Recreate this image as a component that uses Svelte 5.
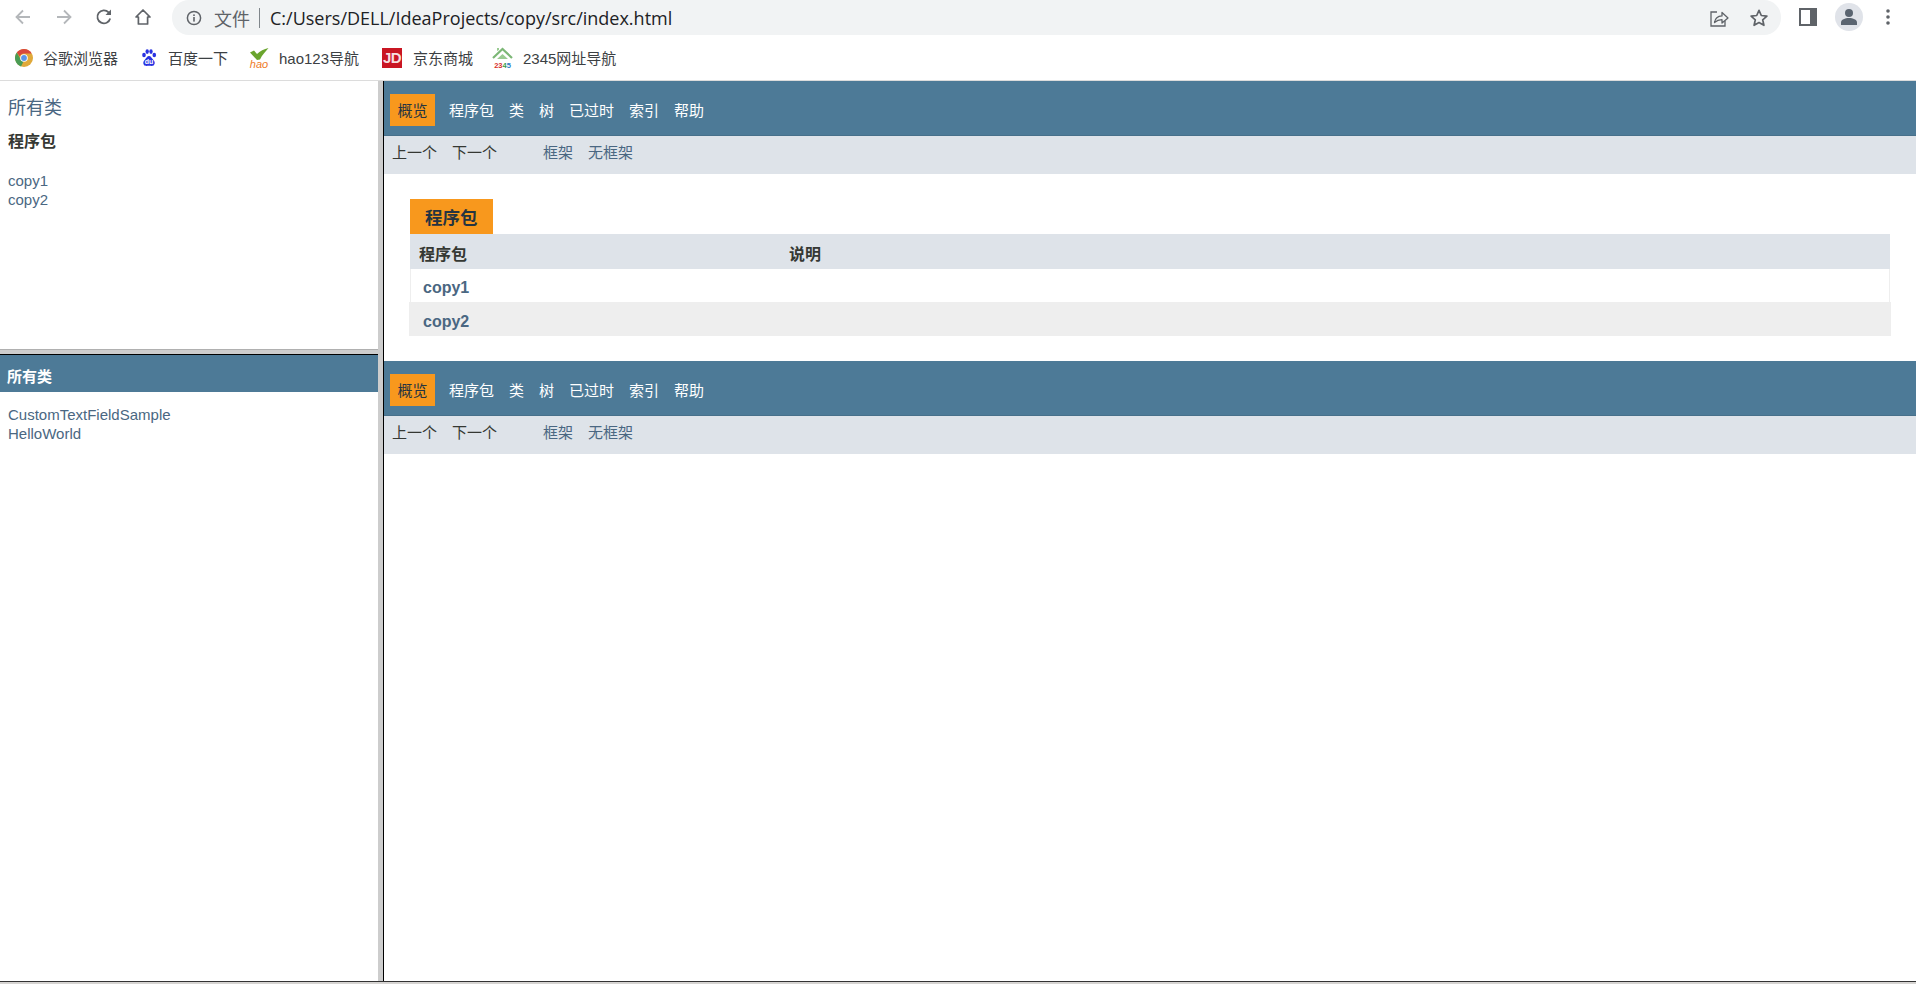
<script lang="ts">
const navItems = ["程序包", "类", "树", "已过时", "索引", "帮助"];
const packages = ["copy1", "copy2"];
const classes = ["CustomTextFieldSample", "HelloWorld"];
</script>

{#snippet topNav()}
  <div class="nav">
    <span class="nav-active">概览</span>
    {#each navItems as item}
      <span class="nav-item">{item}</span>
    {/each}
  </div>
  <div class="subnav">
    <span class="sub-plain">上一个</span>
    <span class="sub-plain">下一个</span>
    <span class="sub-link first">框架</span>
    <span class="sub-link">无框架</span>
  </div>
{/snippet}

<div class="page">
  <header class="toolbar">
    <button class="tb-btn back" aria-label="back">
      <svg width="20" height="20" viewBox="0 0 20 20"><path d="M17 10H4M10 3.5 3.5 10l6.5 6.5" fill="none" stroke="#b4b7ba" stroke-width="1.8" /></svg>
    </button>
    <button class="tb-btn fwd" aria-label="forward">
      <svg width="20" height="20" viewBox="0 0 20 20"><path d="M3 10h13M10 3.5l6.5 6.5-6.5 6.5" fill="none" stroke="#b4b7ba" stroke-width="1.8" /></svg>
    </button>
    <button class="tb-btn reload" aria-label="reload">
      <svg width="20" height="20" viewBox="0 0 20 20"><path d="M16.2 11.5A6.5 6.5 0 1 1 14.6 5.3L16.5 7" fill="none" stroke="#5f6368" stroke-width="1.8" /><path d="M17 2.5V8h-5.5z" fill="#5f6368" /></svg>
    </button>
    <button class="tb-btn home" aria-label="home">
      <svg width="20" height="20" viewBox="0 0 20 20"><path d="M10 3 3 10h2.4v7h9.2v-7H17z" fill="none" stroke="#5f6368" stroke-width="1.7" stroke-linejoin="round" /></svg>
    </button>
    <div class="omnibox">
      <svg class="info" width="16" height="16" viewBox="0 0 16 16"><circle cx="8" cy="8" r="6.6" fill="none" stroke="#5f6368" stroke-width="1.5" /><rect x="7.2" y="7" width="1.6" height="4.6" fill="#5f6368" /><rect x="7.2" y="4.4" width="1.6" height="1.6" fill="#5f6368" /></svg>
      <span class="scheme">文件</span>
      <span class="divider"></span>
      <span class="url">C:/Users/DELL/IdeaProjects/copy/src/index.html</span>
      <span class="spacer"></span>
      <svg class="share" width="20" height="20" viewBox="0 0 20 20"><path d="M8 4H2v14h14v-5" fill="none" stroke="#5f6368" stroke-width="1.3" /><path d="M5.5 14.5c.6-4 3.4-6.400 7.500-6.600V4.500l6 5.400-6 5.200v-3.400c-3 0-5.500 1-7.500 2.800z" fill="none" stroke="#5f6368" stroke-width="1.3" stroke-linejoin="round" /></svg>
      <svg class="star" width="20" height="20" viewBox="0 0 20 20"><path d="M10 2.300l2.300 5.200 5.600.6-4.200 3.700 1.200 5.500L10 14.500l-4.900 2.800 1.200-5.500-4.200-3.700 5.600-.6z" fill="none" stroke="#5f6368" stroke-width="1.7" stroke-linejoin="round" /></svg>
    </div>
    <svg class="panel" width="18" height="18" viewBox="0 0 18 18"><rect x="0" y="0" width="18" height="18" fill="#5f6368" /><rect x="2" y="2" width="9" height="14" fill="#fff" /></svg>
    <div class="avatar">
      <svg width="18" height="18" viewBox="0 0 18 18"><circle cx="9" cy="5" r="4" fill="#5a6470" /><path d="M1 17v-2.500C1 11.500 5 10 9 10s8 1.500 8 4.500V17z" fill="#5a6470" /></svg>
    </div>
    <svg class="kebab" width="6" height="18" viewBox="0 0 6 18"><circle cx="3" cy="3" r="1.800" fill="#5f6368" /><circle cx="3" cy="9" r="1.800" fill="#5f6368" /><circle cx="3" cy="15" r="1.800" fill="#5f6368" /></svg>
  </header>

  <div class="bookmarks">
    <span class="bm bm-chrome">
      <svg width="18" height="18" viewBox="0 0 18 18">
        <circle cx="9" cy="9" r="9" fill="#e0a93a" />
        <path d="M9 0a9 9 0 0 1 7.800 4.500H9A4.500 4.500 0 0 0 4.800 7.400L1.800 3.600A9 9 0 0 1 9 0z" fill="#d9483b" />
        <path d="M1.800 3.600 5.500 10a4 4 0 0 0 3 2.500L6 17.500A9 9 0 0 1 1.800 3.600z" fill="#4a9c55" />
        <circle cx="9" cy="9" r="3.800" fill="#fff" />
        <circle cx="9" cy="9" r="2.900" fill="#5a95e8" />
      </svg>
      <span>谷歌浏览器</span>
    </span>
    <span class="bm bm-baidu">
      <svg width="18" height="18" viewBox="0 0 18 18">
        <ellipse cx="4" cy="6" rx="1.800" ry="2.300" fill="#2932e1" />
        <ellipse cx="7.200" cy="2.600" rx="1.700" ry="2.300" fill="#2932e1" />
        <ellipse cx="11" cy="2.600" rx="1.700" ry="2.300" fill="#2932e1" />
        <ellipse cx="14.300" cy="6" rx="1.800" ry="2.300" fill="#2932e1" />
        <path d="M9 7c-2 0-2.500 2-4 3.500S2.500 14 4 16c1 1.300 3 .8 5 .8s4 .5 5-.8c1.500-2 .5-4-1-5.500S11 7 9 7z" fill="#2932e1" />
        <text class="du" x="9" y="15" text-anchor="middle">du</text>
      </svg>
      <span>百度一下</span>
    </span>
    <span class="bm bm-hao">
      <svg width="22" height="20" viewBox="0 0 22 20">
        <path d="M2 4.500 6 2.500l3 3.500C12 3 16 1 20.500 0c-3 3.500-6.500 7-8.500 11.500L9 12z" fill="#6aa52e" />
        <text class="hao" x="11" y="19.500" text-anchor="middle">hao</text>
      </svg>
      <span>hao123导航</span>
    </span>
    <span class="bm bm-jd">
      <span class="jd">JD</span>
      <span>京东商城</span>
    </span>
    <span class="bm">
      <svg width="21" height="22" viewBox="0 0 21 22">
        <path d="M1 11 10.500 2 20 11" fill="none" stroke="#7cb776" stroke-width="2.200" />
        <path d="M5 4V1h2v2zM5 12l5.500-5 5.500 5z" fill="#9acb92" />
        <text class="n2345" x="10.500" y="20.500" text-anchor="middle"><tspan fill="#d9302a">23</tspan><tspan fill="#3a9a48">4</tspan><tspan fill="#2f7cc4">5</tspan></text>
      </svg>
      <span>2345网址导航</span>
    </span>
  </div>

  <div class="frames">
    <aside class="left">
      <section class="pkg-frame">
        <h1>所有类</h1>
        <h2>程序包</h2>
        <ul>
          {#each packages as p}<li>{p}</li>{/each}
        </ul>
      </section>
      <div class="hsplit"></div>
      <section class="class-frame">
        <div class="class-bar">所有类</div>
        <ul>
          {#each classes as c}<li>{c}</li>{/each}
        </ul>
      </section>
    </aside>
    <div class="vsplit"></div>
    <main class="right">
      {@render topNav()}
      <div class="summary">
        <div class="caption">程序包</div>
        <div class="row head">
          <span class="col1">程序包</span>
          <span>说明</span>
        </div>
        <div class="row alt-a"><span class="pkg">copy1</span></div>
        <div class="row alt-b"><span class="pkg">copy2</span></div>
      </div>
      {@render topNav()}
    </main>
  </div>
  <div class="taskbar"></div>
</div>

<style>
  :global(body) {
    margin: 0;
    background: #fff;
  }
  .page {
    display: flex;
    flex-direction: column;
    height: 984px;
    overflow: hidden;
    font-family: "Liberation Sans", "Noto Sans CJK SC", sans-serif;
    font-size: 15px;
    color: #353833;
  }

  /* browser chrome */
  .toolbar {
    display: flex;
    align-items: flex-start;
    height: 35px;
    flex: none;
  }
  .tb-btn {
    width: 20px;
    height: 20px;
    margin-top: 7px;
    padding: 0;
    border: 0;
    background: none;
  }
  .back { margin-left: 13px; }
  .fwd { margin-left: 21px; }
  .reload { margin-left: 20px; }
  .home { margin-left: 19px; }
  .omnibox {
    display: flex;
    align-items: center;
    width: 1609px;
    height: 35px;
    margin-left: 19px;
    box-sizing: border-box;
    padding-left: 14px;
    border-radius: 17px;
    background: #f1f3f4;
  }
  .scheme {
    margin-left: 12px;
    font-size: 18px;
    color: #5f6368;
  }
  .divider {
    width: 1px;
    height: 20px;
    margin: 0 11px 0 9px;
    background: #80868b;
  }
  .url {
    font-family: "Open Sans", "Noto Sans", sans-serif;
    font-size: 18px;
    margin-left: -1px;
    color: #202124;
  }
  .spacer { flex: 1; }
  .share { margin-right: 20px; }
  .star { margin-right: 12px; }
  .panel { margin: 8px 0 0 18px; flex: none; }
  .avatar {
    display: flex;
    align-items: center;
    justify-content: center;
    width: 28px;
    height: 28px;
    margin: 3px 0 0 18px;
    border-radius: 50%;
    background: #e0e3e9;
    flex: none;
  }
  .kebab { margin: 8px 0 0 22px; flex: none; }

  .bookmarks {
    display: flex;
    align-items: center;
    height: 46px;
    flex: none;
    padding-left: 15px;
    box-sizing: border-box;
    border-bottom: 1px solid #dcdcdc;
    color: #3c4043;
  }
  .bm {
    display: flex;
    align-items: center;
    flex: none;
    gap: 10px;
    box-sizing: border-box;
    font-size: 15px;
    white-space: nowrap;
  }
  .bm svg { flex: none; }
  .bm-chrome { width: 125px; }
  .bm-baidu { width: 108px; }
  .bm-hao { width: 134px; gap: 9px; }
  .bm-jd { width: 110px; gap: 11px; }
  .du {
    font-family: "Liberation Sans", sans-serif;
    font-size: 7px;
    font-weight: 700;
    fill: #fff;
  }
  .hao {
    font-family: "Liberation Sans", sans-serif;
    font-size: 11px;
    font-style: italic;
    fill: #ee7a1f;
  }
  .n2345 {
    font-family: "Liberation Sans", sans-serif;
    font-size: 7.500px;
    font-weight: 700;
  }
  .jd {
    display: flex;
    align-items: center;
    justify-content: center;
    width: 20px;
    height: 20px;
    background: #c91623;
    color: #f6dfe0;
    font-size: 15px;
    font-weight: 700;
    letter-spacing: -0.5px;
  }

  /* frames */
  .frames {
    display: flex;
    flex: 1;
    min-height: 0;
  }
  .left {
    display: flex;
    flex-direction: column;
    width: 378px;
    flex: none;
  }
  .vsplit {
    width: 5px;
    flex: none;
    background: #cdcdcd;
    border-right: 1px solid #000;
  }
  .right {
    flex: 1;
    min-width: 0;
  }
  .pkg-frame {
    height: 268px;
    flex: none;
    padding: 15px 0 0 8px;
    box-sizing: border-box;
  }
  h1 {
    margin: 0;
    font-size: 18px;
    font-weight: 400;
    line-height: 24px;
    color: #4a6782;
  }
  h2 {
    margin: 11px 0 0;
    font-size: 16px;
    font-weight: 700;
    line-height: 22px;
    color: #353833;
  }
  ul {
    margin: 0;
    padding: 0;
    list-style: none;
    color: #4a6782;
    line-height: 19px;
  }
  .pkg-frame ul { margin-top: 18px; }
  .hsplit {
    height: 4px;
    flex: none;
    background: #cdcdcd;
    border-top: 1px solid #b0b0b0;
    border-bottom: 1px solid #000;
  }
  .class-bar {
    height: 37px;
    padding-left: 7px;
    background: #4d7a97;
    color: #fff;
    font-size: 15px;
    font-weight: 700;
    line-height: 43px;
    overflow: hidden;
  }
  .class-frame ul {
    margin-top: 13px;
    padding-left: 8px;
  }

  .nav {
    display: flex;
    align-items: center;
    gap: 15px;
    height: 55px;
    padding: 3px 0 0 6px;
    box-sizing: border-box;
    background: #4d7a97;
    color: #fff;
    border-bottom: 1px solid #47708a;
  }
  .nav-active {
    display: flex;
    align-items: center;
    justify-content: center;
    width: 45px;
    height: 32px;
    margin-right: -1px;
    background: #f8981d;
    color: #253441;
  }
  .subnav {
    display: flex;
    align-items: center;
    gap: 15px;
    height: 38px;
    box-sizing: border-box;
    padding: 0 0 7px 8px;
    background: #dee3e9;
  }
  .sub-plain { color: #353833; }
  .sub-link { color: #4a6782; }
  .sub-link.first { margin-left: 31px; }

  .summary {
    padding: 25px 26px 25px 26px;
  }
  .caption {
    width: 83px;
    height: 35px;
    box-sizing: border-box;
    padding-left: 15px;
    background: #f8981d;
    color: #253441;
    font-size: 17.500px;
    font-weight: 700;
    line-height: 38px;
  }
  .row {
    display: flex;
    align-items: center;
  }
  .head {
    height: 35px;
    box-sizing: border-box;
    padding: 7px 0 0 9px;
    background: #dee3e9;
    font-size: 16px;
    font-weight: 700;
    line-height: 22px;
  }
  .col1 { width: 370px; }
  .alt-a {
    height: 33px;
    padding: 5px 0 0 12px;
    border-right: 1px solid #eee;
    border-left: 1px solid #eee;
    box-sizing: border-box;
  }
  .alt-b {
    height: 34px;
    margin: 0 -1px;
    box-sizing: border-box;
    padding: 5px 0 0 14px;
    background: #eee;
  }
  .pkg {
    color: #4a6782;
    font-size: 16px;
    font-weight: 700;
  }
  .taskbar {
    height: 3px;
    flex: none;
    background: #d6d4d2;
    border-top: 1px solid #333;
    box-sizing: border-box;
  }
</style>
